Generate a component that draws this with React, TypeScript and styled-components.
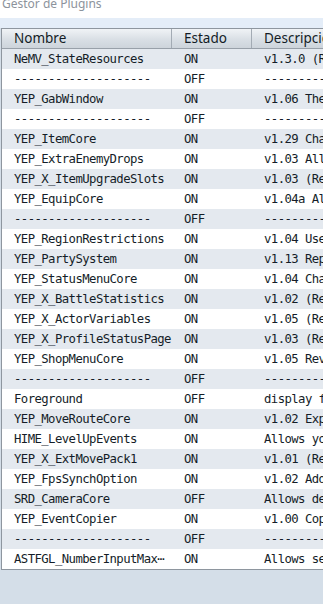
import React from "react";
import styled, { createGlobalStyle } from "styled-components";

const GlobalStyle = createGlobalStyle`
  html, body {
    margin: 0;
    padding: 0;
    background: #d4dee8;
    overflow: hidden;
  }
`;

const Window = styled.div`
  width: 323px;
  height: 604px;
  overflow: hidden;
  display: flex;
  flex-direction: column;
  background: #d4dee8;
`;

const TitleBar = styled.div`
  height: 18px;
  background: #ffffff;
  overflow: hidden;
  padding-left: 2px;
`;

const Title = styled.div`
  margin-top: -3px;
  font-family: "Noto Sans", "Open Sans", sans-serif;
  font-size: 12px;
  line-height: 14px;
  color: #8c939c;
`;

const Band = styled.div`
  height: 10px;
  background: #e4edf8;
`;

const Table = styled.div`
  margin-left: 1px;
  width: 480px;
  border: 1px solid #8e969f;
  border-right: none;
  background: #ffffff;
`;

const cols = "170px 80px 1fr";

const HeaderRow = styled.div`
  display: grid;
  grid-template-columns: ${cols};
  height: 19px;
  border-bottom: 1px solid #98a0a9;
  background: linear-gradient(#f0f3f6, #d9dfe5 55%, #cdd4db);
`;

const HeaderCell = styled.div<{ $last?: boolean }>`
  padding-left: 12px;
  font-family: "Noto Sans", "Open Sans", sans-serif;
  font-size: 13.5px;
  line-height: 19px;
  color: #131c26;
  white-space: nowrap;
  overflow: hidden;
  border-right: ${(p) => (p.$last ? "none" : "1px solid #a3abb4")};
`;

const Row = styled.div<{ $alt: boolean }>`
  display: grid;
  grid-template-columns: ${cols};
  height: 20px;
  background: ${(p) => (p.$alt ? "#e4e9ef" : "#ffffff")};
`;

const Cell = styled.div`
  padding-left: 12px;
  font-family: "DejaVu Sans Mono", "Liberation Mono", monospace;
  font-size: 12.3px;
  letter-spacing: -0.58px;
  line-height: 20px;
  color: #141d28;
  white-space: nowrap;
  overflow: hidden;
`;

const DASH = "--------------------";

type Plugin = { name: string; on: boolean; desc: string };

const plugins: Plugin[] = [
  { name: "NeMV_StateResources", on: true, desc: "v1.3.0 (Requires NeMV_Resources) State based resources" },
  { name: DASH, on: false, desc: DASH },
  { name: "YEP_GabWindow", on: true, desc: "v1.06 The Gab Window functions as a window" },
  { name: DASH, on: false, desc: DASH },
  { name: "YEP_ItemCore", on: true, desc: "v1.29 Changes the way Items are handled" },
  { name: "YEP_ExtraEnemyDrops", on: true, desc: "v1.03 Allows enemies to drop more items" },
  { name: "YEP_X_ItemUpgradeSlots", on: true, desc: "v1.03 (Requires YEP_ItemCore.js)" },
  { name: "YEP_EquipCore", on: true, desc: "v1.04a Allows for the equipment system" },
  { name: DASH, on: false, desc: DASH },
  { name: "YEP_RegionRestrictions", on: true, desc: "v1.04 Use regions to block out Events" },
  { name: "YEP_PartySystem", on: true, desc: "v1.13 Replaces the default 'Formation'" },
  { name: "YEP_StatusMenuCore", on: true, desc: "v1.04 Changes the Status menu" },
  { name: "YEP_X_BattleStatistics", on: true, desc: "v1.02 (Requires YEP_StatusMenuCore.js)" },
  { name: "YEP_X_ActorVariables", on: true, desc: "v1.05 (Requires YEP_StatusMenuCore.js)" },
  { name: "YEP_X_ProfileStatusPage", on: true, desc: "v1.03 (Requires YEP_StatusMenuCore.js)" },
  { name: "YEP_ShopMenuCore", on: true, desc: "v1.05 Revamps the shop scene" },
  { name: DASH, on: false, desc: DASH },
  { name: "Foreground", on: false, desc: "display foreground image" },
  { name: "YEP_MoveRouteCore", on: true, desc: "v1.02 Expand the scope of Move Routes" },
  { name: "HIME_LevelUpEvents", on: true, desc: "Allows you to run common events" },
  { name: "YEP_X_ExtMovePack1", on: true, desc: "v1.01 (Requires YEP_MoveRouteCore.js)" },
  { name: "YEP_FpsSynchOption", on: true, desc: "v1.02 Adds a new option to the Options" },
  { name: "SRD_CameraCore", on: false, desc: "Allows developers to control the camera" },
  { name: "YEP_EventCopier", on: true, desc: "v1.00 Copy events from other maps" },
  { name: DASH, on: false, desc: DASH },
  { name: "ASTFGL_NumberInputMax\u22ef", on: true, desc: "Allows setting the max number input" },
];

export default function App() {
  return (
    <Window>
      <GlobalStyle />
      <TitleBar>
        <Title>Gestor de Plugins</Title>
      </TitleBar>
      <Band />
      <Table>
        <HeaderRow>
          <HeaderCell>Nombre</HeaderCell>
          <HeaderCell>Estado</HeaderCell>
          <HeaderCell $last>Descripción</HeaderCell>
        </HeaderRow>
        {plugins.map((p, i) => (
          <Row key={i} $alt={i % 2 === 0}>
            <Cell>{p.name}</Cell>
            <Cell>{p.on ? "ON" : "OFF"}</Cell>
            <Cell>{p.desc}</Cell>
          </Row>
        ))}
      </Table>
    </Window>
  );
}
